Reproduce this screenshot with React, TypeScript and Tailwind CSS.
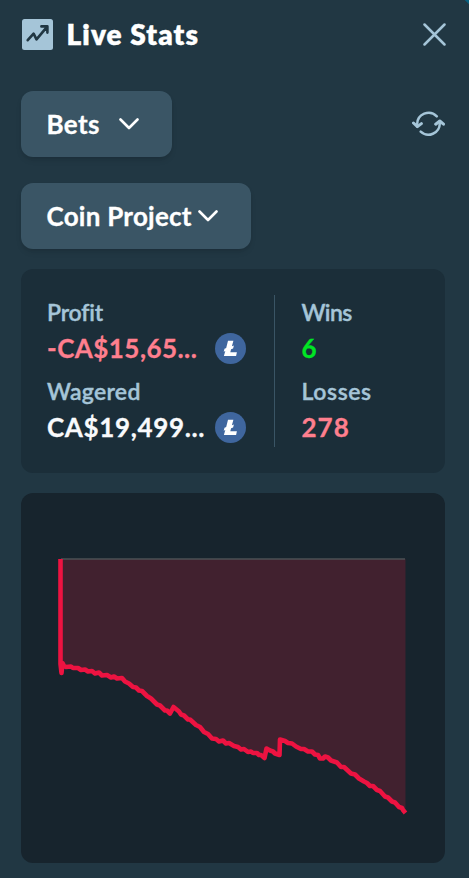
import React from "react";

function TrendIcon() {
  return (
    <svg width="31" height="31" viewBox="0 0 31 31" className="block shrink-0">
      <rect width="31" height="31" rx="2.5" fill="#a5c5d8" />
      <path d="M5.7 21.2 11.6 14.6l2.9 5.8L24.6 8.4M19.4 7.4h6v6.2" fill="none" stroke="#213743" strokeWidth="2.6" strokeLinejoin="round" strokeLinecap="round" />
    </svg>
  );
}

function CloseIcon() {
  return (
    <svg width="23" height="23" viewBox="0 0 23 23" className="block" fill="none" stroke="#a5c5d8" strokeWidth="2.5" strokeLinecap="round">
      <path d="m1.5 1.5 20 20M21.5 1.5l-20 20" />
    </svg>
  );
}

function RefreshIcon() {
  return (
    <svg width="33" height="26" viewBox="0 0 33 26" className="block" fill="none" stroke="#a5c5d8" strokeWidth="2.5" strokeLinecap="round" strokeLinejoin="round">
      <path d="M24.8 5.3A11.4 11.4 0 0 0 5.2 13.5v2" />
      <path d="M1.5 12 5.4 15.6 9.4 12.6" strokeWidth="3" />
      <path d="M8.7 20.7A11.4 11.4 0 0 0 27.8 12.5v-2" />
      <path d="M23.7 13.2 27.8 10 31.5 13.2" strokeWidth="3" />
    </svg>
  );
}

function Chevron() {
  return (
    <svg width="20" height="12" viewBox="0 0 20 12" className="block shrink-0" fill="none" stroke="#fff" strokeWidth="2.6" strokeLinecap="round" strokeLinejoin="round">
      <path d="m1.5 1.5 8.5 8.5 8.5-8.5" />
    </svg>
  );
}

function Litecoin() {
  return (
    <svg width="31" height="31" viewBox="0 0 31 31" className="block shrink-0">
      <circle cx="15.5" cy="15.5" r="15.5" fill="#3f669e" />
      <path d="M13 7.8h5.4l-1.5 5.5 2-.8-.8 3-2 .8-.8 3h6.6l-.8 3.7H8.9l1.4-4.9-1.6.6.8-3 1.7-.7z" fill="#fff" />
    </svg>
  );
}

const profile: [number, number][] = [
  [39.5, 66], [39.5, 171], [40.5, 180], [41.5, 170], [43, 173], [45, 174], [50, 173.5], [52, 175], [57, 175], [60, 177], [64, 176.5], [67, 178.5], [71, 178], [74, 180.5], [78, 179.5],
  [81, 182.5], [86, 182], [90, 184.5], [93, 183.5], [96, 185.5], [101, 185], [104, 188.5], [108, 190.5], [112, 194], [115, 194.5], [118, 197.5], [121, 198], [126, 203], [130, 205.5], [136, 211.5],
  [139, 212.5], [144, 217.5], [146, 217.5], [149, 220.5], [152.5, 214], [158, 218.5], [160, 221.5], [163, 222.5], [167, 226.5], [169, 226.5], [175, 232], [179, 234], [183, 239], [187, 241], [191, 245.5], [195, 246], [198, 248.5], [202, 247.5], [205, 250.5], [208, 250],
  [213, 253], [217, 254], [220, 256.5], [223, 256], [227, 259], [230, 258.5], [232, 260], [236, 260], [238, 262], [240, 262], [243.5, 265], [245.5, 255.5], [249, 257.5], [252, 258.5], [254, 260.5], [258.5, 262], [259, 246.5],
  [264, 248], [267, 250], [271, 250.5], [275, 253.5], [280, 256], [283, 256], [287, 258.5], [291, 258.5], [294, 261.5], [297, 262], [299, 265.5], [302, 265.5], [304, 263.5], [307, 264.5], [310, 267.5], [313, 268.5], [316, 269.5], [320, 274],
  [323, 274], [330, 280.5], [334, 281.5], [338, 285.5], [343, 288.5], [346, 290], [349, 293], [352, 293], [356, 297], [359, 298], [364, 303.5], [367, 304.5], [371, 308.5], [374, 309.5], [378, 314], [381, 315],
  [382, 317], [384.5, 320],
];

function ProfitChart() {
  const line = profile.map((p) => p.join(",")).join(" ");
  return (
    <svg width="424" height="370" viewBox="0 0 424 370" className="block">
      <polygon points={line + " 384.5,66"} fill="#41212f" />
      <path d="M40 66H384" stroke="#4d5055" strokeWidth="1.6" />
      <polyline points={line} fill="none" stroke="#ed1341" strokeWidth="4.6" strokeLinejoin="round" />
    </svg>
  );
}

function Stat({ label, value, spacing, tone, coin }: { label: string; value: string; spacing: string; tone: string; coin?: boolean }) {
  return (
    <div>
      <div className={"h-[34px] text-[23px] leading-[35px] font-semibold text-[#a5c5d8] [-webkit-text-stroke:0.4px_currentColor] " + spacing}>{label}</div>
      <div className="flex h-[39px] items-center justify-between">
        <span className={"text-[26px] leading-[39px] font-bold whitespace-nowrap [-webkit-text-stroke:0.3px_currentColor] " + tone}>{value}</span>
        {coin && <Litecoin />}
      </div>
    </div>
  );
}

export default function App() {
  return (
    <main className="relative h-[878px] w-[469px] overflow-hidden bg-[#213743] px-[21px] pt-[17px] font-['Lato',sans-serif] text-white">
      <div className="absolute -top-[3px] -right-[3px] size-[6px] rotate-45 bg-[#08607f]" />
      <header className="flex h-[35px] items-center justify-between pr-[2px] pl-px">
        <div className="flex items-center gap-[13.5px]">
          <TrendIcon />
          <h1 className="text-[28px] leading-[33px] font-extrabold tracking-[1.1px] [-webkit-text-stroke:0.4px_currentColor]">Live Stats</h1>
        </div>
        <CloseIcon />
      </header>
      <div className="mt-[39px] flex h-[66px] items-center justify-between pr-[3px]">
        <button className="flex h-[66px] w-[151px] items-center gap-[19.5px] rounded-xl bg-[#3a5565] pl-[25.5px] text-[26px] font-bold tracking-[0.4px] shadow-md">
          <span className="[-webkit-text-stroke:0.3px_currentColor]">Bets</span><Chevron />
        </button>
        <RefreshIcon />
      </div>
      <button className="mt-[26px] flex h-[66px] w-[230px] items-center gap-[6px] rounded-xl bg-[#3a5565] pl-[25.5px] text-[26px] font-bold tracking-[0.25px] shadow-md">
        <span className="[-webkit-text-stroke:0.3px_currentColor]">Coin Project</span><Chevron />
      </button>
      <section className="mt-5 flex h-[204px] w-[424px] rounded-xl bg-[#1b2e39] px-[26px] py-[26px]">
        <div className="flex w-[228px] flex-col gap-[6px] border-r border-[#3a5565] pr-[28px]">
          <Stat label="Profit" value="-CA$15,65..." spacing="tracking-[-0.2px]" tone="text-[#ff7f8e] tracking-[0.45px]" coin />
          <Stat label="Wagered" value="CA$19,499..." spacing="tracking-[0.3px]" tone="text-[#f9fafc] tracking-[0.65px]" coin />
        </div>
        <div className="flex flex-col gap-[6px] pl-[26.5px]">
          <Stat label="Wins" value="6" spacing="tracking-[-0.6px]" tone="text-[#00e524]" />
          <Stat label="Losses" value="278" spacing="tracking-[0.6px]" tone="text-[#ff7f8e] tracking-[1px]" />
        </div>
      </section>
      <section className="mt-5 h-[370px] w-[424px] overflow-hidden rounded-xl bg-[#17242d]">
        <ProfitChart />
      </section>
    </main>
  );
}
